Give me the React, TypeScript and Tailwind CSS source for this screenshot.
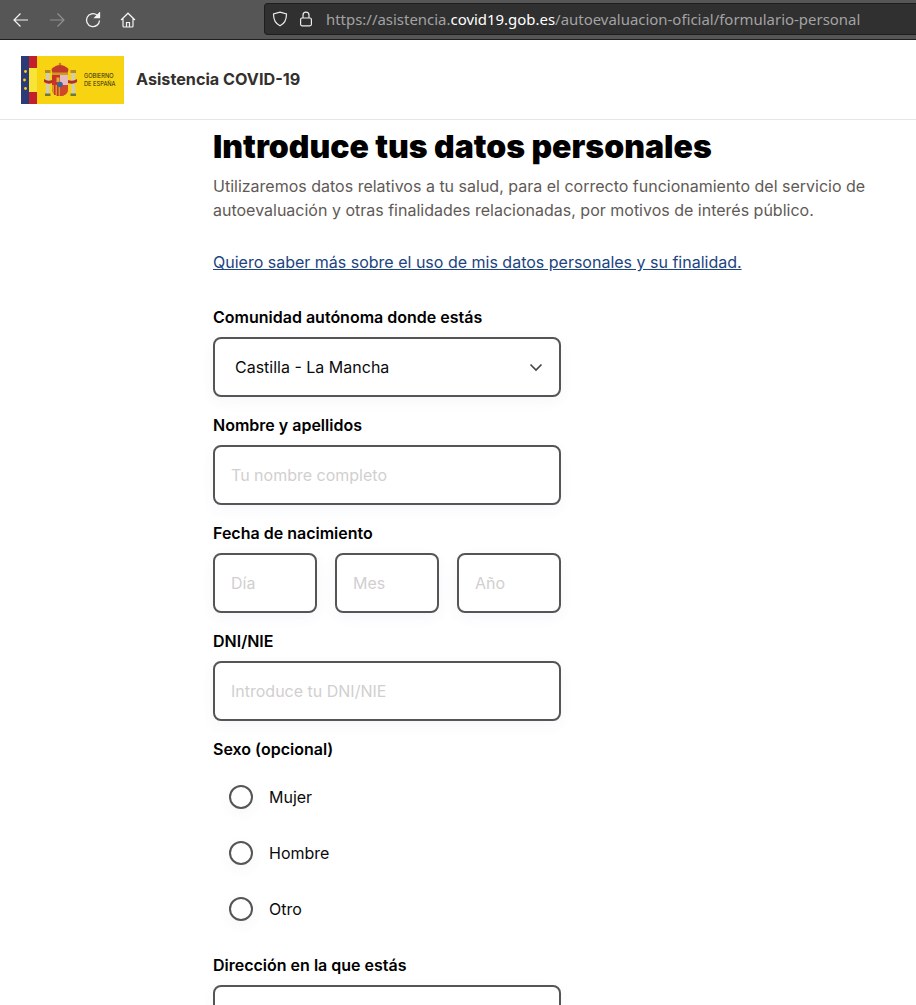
import React from "react";

const inter = "font-['Inter',sans-serif]";
const fieldClass =
  "h-[60px] rounded-lg border-2 border-[#555555] bg-white shadow-[0_4px_14px_rgba(60,80,140,0.05)] flex items-center text-base";

function Label({ children }: { children: React.ReactNode }) {
  return <div className="h-6 mb-2 text-base leading-6 font-semibold text-black">{children}</div>;
}

function TextField({ placeholder, className = "" }: { placeholder: string; className?: string }) {
  return (
    <div className={`${fieldClass} pl-4 text-[#d1cfcf] ${className}`}>{placeholder}</div>
  );
}

function Radio({ label }: { label: string }) {
  return (
    <div className="h-10 mb-4 flex items-center pl-4">
      <div className="w-6 h-6 rounded-full border-2 border-[#555555] bg-white shadow-[0_4px_14px_rgba(60,80,140,0.05)]" />
      <span className="ml-4 text-base text-[#0b0b0b]">{label}</span>
    </div>
  );
}

function Logo() {
  return (
    <svg width="103" height="48" viewBox="0 0 103 48" className="block shrink-0">
      <rect width="103" height="48" fill="#f8d312" />
      <rect width="8" height="48" fill="#2d3a78" />
      <rect x="8" width="8" height="48" fill="#c4202b" />
      <rect x="8" y="12" width="8" height="24" fill="#f7e437" />
      <circle cx="4.500" cy="15.500" r="1.400" fill="#f8d312" />
      <circle cx="3.500" cy="24" r="1.400" fill="#f8d312" />
      <circle cx="4.500" cy="32.500" r="1.400" fill="#f8d312" />
      {/* crown */}
      <path d="M30.500 13 Q39 5 47.500 13 L46.500 18 H31.500 Z" fill="#c23a2a" />
      <rect x="31" y="16.500" width="16" height="2.500" fill="#cf9a20" />
      <circle cx="39" cy="8" r="1.300" fill="#b8871c" />
      {/* shield */}
      <path d="M31 19 H47 V32 Q47 40 39 40 Q31 40 31 32 Z" fill="#c8342c" />
      <rect x="39" y="19" width="8" height="10" fill="#e4bcc0" />
      <path d="M31 29 H39 V40 Q31 40 31 32 Z" fill="#d99a26" />
      <rect x="33" y="29" width="1.500" height="10" fill="#c8342c" />
      <rect x="36" y="29" width="1.500" height="11" fill="#c8342c" />
      <path d="M39 29 H47 V32 Q47 40 39 40 Z" fill="#d0482a" />
      <rect x="35.500" y="21.500" width="3" height="4.500" fill="#e0b030" />
      <circle cx="39" cy="28.500" r="2.800" fill="#3d62a0" />
      {/* pillars */}
      <rect x="25" y="17" width="3.500" height="21" fill="#cfcdb8" />
      <rect x="50.500" y="17" width="3.500" height="21" fill="#cfcdb8" />
      <rect x="24" y="14" width="5.500" height="3" fill="#b58a24" />
      <rect x="49.500" y="14" width="5.500" height="3" fill="#b58a24" />
      <rect x="24" y="37.500" width="5.500" height="2.500" fill="#6e7a3a" />
      <rect x="49.500" y="37.500" width="5.500" height="2.500" fill="#6e7a3a" />
      <path d="M23 23 Q27 26 31 24 V27 Q27 29 23 26 Z" fill="#b3302a" />
      <path d="M56 23 Q52 26 47 24 V27 Q52 29 56 26 Z" fill="#b3302a" />
      <text x="63" y="21.500" fontSize="5.700" fill="#2a2610" fontFamily="Inter, sans-serif">GOBIERNO</text>
      <text x="63" y="29.500" fontSize="5.700" fill="#2a2610" fontFamily="Inter, sans-serif">DE ESPAÑA</text>
    </svg>
  );
}

export default function App() {
  return (
    <div className={`h-[1005px] w-[916px] overflow-hidden bg-white ${inter}`}>
      {/* browser toolbar */}
      <div className="h-10 bg-[#565656] border-b border-[#1f1f1f] flex items-center pt-[1px]">
        <div className="w-[264px] shrink-0 flex items-center">
          <svg width="16" height="16" viewBox="0 0 16 16" fill="none" stroke="#f4f4f4" strokeWidth="1.200" className="ml-[13px]">
            <path d="M15 8H1.500M7.500 1.500 1 8l6.500 6.500" />
          </svg>
          <svg width="16" height="16" viewBox="0 0 16 16" fill="none" stroke="#8f8f8f" strokeWidth="1.200" className="ml-[20px]">
            <path d="M1 8h13.500M8.500 1.500 15 8l-6.500 6.500" />
          </svg>
          <svg width="16" height="16" viewBox="0 0 16 16" fill="none" stroke="#f4f4f4" strokeWidth="1.300" className="ml-[20px]">
            <path d="M14.500 8.500A6.500 6.500 0 1 1 12 3" />
            <path d="M14.500 1v4.500H10Z" fill="#f4f4f4" />
          </svg>
          <svg width="16" height="16" viewBox="0 0 16 16" fill="none" stroke="#f4f4f4" strokeWidth="1.200" className="ml-[19px]">
            <path d="M1 8 8 1.200 15 8M3 6.500V14a1 1 0 0 0 1 1h8a1 1 0 0 0 1-1V6.500" />
            <path d="M6.500 15V10.500h3V15" />
          </svg>
        </div>
        <div className="h-[32px] w-[652px] -mt-[2px] rounded-l bg-[#303030] border border-[#1e1e1e] border-r-0 flex items-center">
          <svg width="16" height="16" viewBox="0 0 16 16" fill="none" stroke="#ececec" strokeWidth="1.200" className="ml-[7px]">
            <path d="M8 1.200 14.500 3c0 6-1.500 9.500-6.500 11.800C3 12.500 1.500 9 1.500 3Z" />
          </svg>
          <svg width="14" height="16" viewBox="0 0 14 16" fill="none" stroke="#ececec" strokeWidth="1.200" className="ml-[11px]">
            <rect x="1.600" y="7" width="10.800" height="7.800" rx="1.500" />
            <path d="M4 7V4.200a3 3 0 0 1 6 0V7" />
          </svg>
          <div className="ml-[13px] text-[14.950px] leading-none whitespace-nowrap font-['Noto_Sans',sans-serif] text-[#a3a3a3]">
            https://asistencia.<span className="text-white">covid19.gob.es</span>/autoevaluacion-oficial/formulario-personal
          </div>
        </div>
      </div>

      {/* site header */}
      <header className="h-20 border-b border-[#e6e6e6] flex items-center pl-[21px]">
        <Logo />
        <span className="ml-[12px] text-[16.200px] leading-6 font-bold text-[#33302e] -mt-[1px]">Asistencia COVID-19</span>
      </header>

      {/* content */}
      <main className="pl-[213px] pt-[5px]">
        <h1 className="text-[32px] leading-[44px] font-black text-black">Introduce tus datos personales</h1>
        <p className="mt-[5px] w-[670px] text-base leading-6 text-[#5f5a56]">
          Utilizaremos datos relativos a tu salud, para el correcto funcionamiento del servicio de autoevaluación y otras finalidades relacionadas, por motivos de interés público.
        </p>
        <a className="block mt-[28px] mb-[31px] text-base leading-6 text-[#1b4480] underline">
          Quiero saber más sobre el uso de mis datos personales y su finalidad.
        </a>

        <div className="w-[348px]">
          <Label>Comunidad autónoma donde estás</Label>
          <div className={`${fieldClass} pl-5 pr-4 justify-between text-[#0b0b0b] mb-4`}>
            <span>Castilla - La Mancha</span>
            <svg width="14" height="14" viewBox="0 0 14 14" fill="none" stroke="#444" strokeWidth="1.600">
              <path d="M1.500 4.500 7 10l5.500-5.500" />
            </svg>
          </div>

          <Label>Nombre y apellidos</Label>
          <TextField placeholder="Tu nombre completo" className="mb-4" />

          <Label>Fecha de nacimiento</Label>
          <div className="flex gap-[18px] mb-4">
            <TextField placeholder="Día" className="w-[104px]" />
            <TextField placeholder="Mes" className="w-[104px]" />
            <TextField placeholder="Año" className="w-[104px]" />
          </div>

          <Label>DNI/NIE</Label>
          <TextField placeholder="Introduce tu DNI/NIE" className="mb-4" />

          <Label>Sexo (opcional)</Label>
          <div className="mt-4 pb-2">
            <Radio label="Mujer" />
            <Radio label="Hombre" />
            <Radio label="Otro" />
          </div>

          <Label>Dirección en la que estás</Label>
          <TextField placeholder="" />
        </div>
      </main>
    </div>
  );
}
